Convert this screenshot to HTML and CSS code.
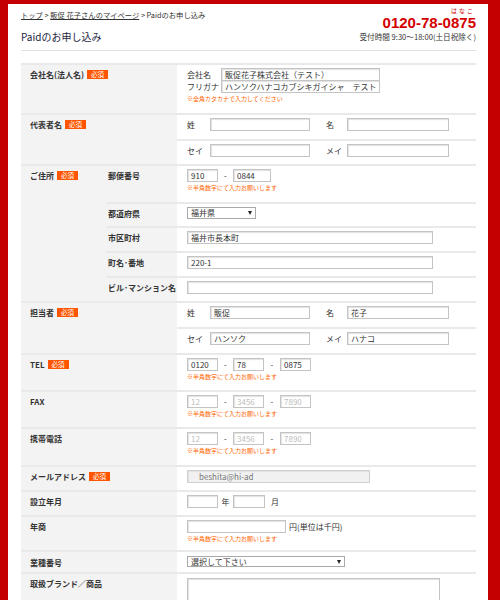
FILE: index.html
```html
<!DOCTYPE html>
<html lang="ja">
<head>
<meta charset="utf-8">
<title>Paidのお申し込み</title>
<link rel="stylesheet" href="styles.css">
</head>
<body>
<div class="page">
  <header class="head">
    <div class="head-left">
      <nav class="crumbs"><a href="#">トップ</a> &gt; <a href="#">販促 花子さんのマイページ</a> &gt; Paidのお申し込み</nav>
      <h1 class="title">Paidのお申し込み</h1>
    </div>
    <div class="head-right">
      <div class="kana">はなこ</div>
      <div class="tel">0120-78-0875</div>
      <div class="hours">受付時間 9:30～18:00(土日祝除く)</div>
    </div>
  </header>

  <div class="form">
    <div class="row">
      <div class="th">会社名(法人名)<span class="req">必須</span></div>
      <div class="td first">
        <div class="company">
          <span class="clabel">会社名</span><input class="cin" type="text" value="販促花子株式会社（テスト）">
          <span class="clabel">フリガナ</span><input class="cin cin2" type="text" value="ハンソクハナコカブシキガイシャ　テスト">
        </div>
        <p class="note">※全角カタカナで入力してください</p>
      </div>
    </div>

    <div class="row">
      <div class="th">代表者名<span class="req">必須</span></div>
      <div class="td split">
        <div class="line tall"><span class="nl">姓</span><input class="w100" type="text"><span class="nl2">名</span><input class="w102" type="text"></div>
        <div class="line"><span class="nl">セイ</span><input class="w100" type="text"><span class="nl2">メイ</span><input class="w102" type="text"></div>
      </div>
    </div>

    <div class="row addr">
      <div class="th">ご住所<span class="req">必須</span></div>
      <div class="subs">
        <div class="subrow">
          <div class="th2">郵便番号</div>
          <div class="td roomy">
            <div class="line"><input class="w31" type="text" value="910"><span class="dash">-</span><input class="w38" type="text" value="0844"></div>
            <p class="note">※半角数字にて入力お願いします</p>
          </div>
        </div>
        <div class="subrow">
          <div class="th2">都道府県</div>
          <div class="td"><div class="line"><span class="select pref">福井県</span></div></div>
        </div>
        <div class="subrow">
          <div class="th2">市区町村</div>
          <div class="td"><div class="line"><input class="w246" type="text" value="福井市長本町"></div></div>
        </div>
        <div class="subrow">
          <div class="th2">町名･番地</div>
          <div class="td"><div class="line"><input class="w246" type="text" value="220-1"></div></div>
        </div>
        <div class="subrow">
          <div class="th2">ビル･マンション名</div>
          <div class="td"><div class="line"><input class="w246" type="text"></div></div>
        </div>
      </div>
    </div>

    <div class="row">
      <div class="th">担当者<span class="req">必須</span></div>
      <div class="td split">
        <div class="line tall"><span class="nl">姓</span><input class="w100" type="text" value="販促"><span class="nl2">名</span><input class="w102" type="text" value="花子"></div>
        <div class="line tall"><span class="nl">セイ</span><input class="w100" type="text" value="ハンソク"><span class="nl2">メイ</span><input class="w102" type="text" value="ハナコ"></div>
      </div>
    </div>

    <div class="row">
      <div class="th">TEL<span class="req">必須</span></div>
      <div class="td">
        <div class="line"><input class="w31" type="text" value="0120"><span class="dash">-</span><input class="w31" type="text" value="78"><span class="dash d2">-</span><input class="w31" type="text" value="0875"></div>
        <p class="note">※半角数字にて入力お願いします</p>
      </div>
    </div>

    <div class="row">
      <div class="th">FAX</div>
      <div class="td">
        <div class="line"><input class="w31" type="text" placeholder="12"><span class="dash">-</span><input class="w31" type="text" placeholder="3456"><span class="dash d2">-</span><input class="w31" type="text" placeholder="7890"></div>
        <p class="note">※半角数字にて入力お願いします</p>
      </div>
    </div>

    <div class="row">
      <div class="th">携帯電話</div>
      <div class="td roomy">
        <div class="line"><input class="w31" type="text" placeholder="12"><span class="dash">-</span><input class="w31" type="text" placeholder="3456"><span class="dash d2">-</span><input class="w31" type="text" placeholder="7890"></div>
        <p class="note">※半角数字にて入力お願いします</p>
      </div>
    </div>

    <div class="row">
      <div class="th">メールアドレス<span class="req">必須</span></div>
      <div class="td"><div class="line"><input class="w183 mail" type="text" value="beshita@hi-ad" disabled></div></div>
    </div>

    <div class="row">
      <div class="th">設立年月</div>
      <div class="td"><div class="line"><input class="w31" type="text"><span class="unit">年</span><input class="w32" type="text"><span class="unit2">月</span></div></div>
    </div>

    <div class="row">
      <div class="th">年商</div>
      <div class="td tight">
        <div class="line"><input class="w99" type="text"><span class="yen">円(単位は千円)</span></div>
        <p class="note">※半角数字にて入力お願いします</p>
      </div>
    </div>

    <div class="row">
      <div class="th mid">業種番号</div>
      <div class="td mid"><div class="line"><span class="select ind">選択して下さい</span></div></div>
    </div>

    <div class="row">
      <div class="th">取扱ブランド／商品</div>
      <div class="td"><textarea class="brand"></textarea></div>
    </div>
  </div>
</div>
</body>
</html>
```

FILE: styles.css
```css
* {
  box-sizing: border-box;
  margin: 0;
  padding: 0;
}

body {
  background: #c40000;
  font-family: "Noto Sans CJK JP", "Liberation Sans", sans-serif;
  font-size: 8px;
  color: #333;
}

.page {
  background: #fff;
  margin: 4px 12px 0 8px;
  padding: 0 12px 0 13px;
  min-height: 600px;
}

/* header */
.head {
  display: flex;
  justify-content: space-between;
  align-items: flex-start;
  padding: 5px 0 6px;
  border-bottom: 1px solid #e0e0e0;
}

.crumbs {
  line-height: 12px;
  font-size: 7.3px;
  color: #333;
}

.crumbs a {
  color: #333;
  text-decoration: underline;
}

.title {
  margin-top: 9px;
  font-size: 10px;
  line-height: 14px;
  font-weight: normal;
  color: #1e1e40;
}

.head-right {
  display: flex;
  flex-direction: column;
  align-items: flex-end;
}

.kana {
  margin-top: -2px;
  margin-right: 1px;
  font-size: 6px;
  line-height: 7px;
  letter-spacing: 2px;
  color: #d40000;
}

.tel {
  margin-top: 1px;
  font-family: "Liberation Sans", Arial, sans-serif;
  font-weight: bold;
  font-size: 15px;
  line-height: 15px;
  color: #d40000;
}

.hours {
  font-size: 7.6px;
  line-height: 10px;
  margin-top: 2px;
  color: #333;
}

/* form table */
.form {
  margin-top: 12px;
}

.row {
  display: grid;
  grid-template-columns: 156px 1fr;
  border-top: 2px solid #e9e9e9;
}

.row.addr {
  grid-template-columns: 85px 1fr;
}

.th {
  background: #f3f3f3;
  font-weight: bold;
  padding: 3px 9px;
  line-height: 13px;
  color: #333;
}

.th.mid {
  padding-top: 4px;
}

.req {
  display: inline-block;
  vertical-align: 1px;
  margin-left: 3px;
  padding: 0 4px;
  height: 9px;
  line-height: 9px;
  font-size: 6.5px;
  font-weight: normal;
  color: #fff;
  background: #ff5500;
}

.td {
  padding: 3px 10px 7px;
  line-height: 13px;
}

.td.first,
.td.roomy {
  padding-bottom: 8px;
}

.td.split {
  padding: 0;
}

.td.tight {
  padding-bottom: 5px;
}

.td.mid {
  padding: 4px 10px 5px;
}

.split .line {
  padding: 3px 10px 7px;
}

.split .line.tall {
  padding-bottom: 8px;
}

.split .line + .line {
  border-top: 2px solid #e9e9e9;
}

.subrow {
  display: grid;
  grid-template-columns: 71px 1fr;
}

.subrow + .subrow {
  border-top: 2px solid #e9e9e9;
}

.th2 {
  background: #f3f3f3;
  font-weight: bold;
  padding: 3px 2px;
  line-height: 13px;
  white-space: nowrap;
}

.line {
  display: flex;
  align-items: center;
}

.note {
  color: #ff6600;
  font-size: 6px;
  line-height: 8px;
  margin: 2px 0;
}

/* inputs */
input,
textarea {
  font-family: "Noto Sans CJK JP", "Liberation Sans", sans-serif;
  font-size: 8px;
  color: #333;
  height: 13px;
  border: 1px solid #c4c4c4;
  box-shadow: inset 1px 1px 1px #e2e2e2;
  padding: 0 3px;
  background: #fff;
  outline: none;
}

input::placeholder {
  color: #bdbdbd;
}

.company {
  display: grid;
  grid-template-columns: 34px 159px;
  align-items: center;
}

.clabel {
  line-height: 12px;
}

.cin {
  width: 159px;
}

.cin2 {
  margin-top: -1px;
}

.nl {
  width: 23px;
}

.nl2 {
  width: 21px;
  margin-left: 16px;
}

.w31 { width: 31px; }
.w32 { width: 32px; }
.w38 { width: 38px; }
.w99 { width: 99px; }
.w100 { width: 100px; }
.w102 { width: 102px; }
.w183 { width: 183px; }
.w246 { width: 246px; }

.dash {
  width: 15px;
  text-align: center;
}

.dash.d2 {
  width: 16px;
}

.unit {
  width: 15px;
  text-align: center;
}

.unit2 {
  margin-left: 6px;
}

.yen {
  margin-left: 3px;
}

.mail {
  background: #f1f1f1;
  color: #777;
  padding-left: 11px;
  border-color: #cfcfcf;
}

.select {
  display: inline-flex;
  align-items: center;
  justify-content: space-between;
  height: 12px;
  border: 1px solid #a9a9a9;
  background: #fff;
  padding: 0 3px;
  line-height: 10px;
}

.select::after {
  content: "";
  border-left: 2.5px solid transparent;
  border-right: 2.5px solid transparent;
  border-top: 4px solid #222;
}

.select.pref {
  width: 69px;
}

.select.ind {
  width: 158px;
  height: 11px;
}

.brand {
  display: block;
  width: 253px;
  height: 60px;
  margin-top: 1px;
  resize: none;
}
```
